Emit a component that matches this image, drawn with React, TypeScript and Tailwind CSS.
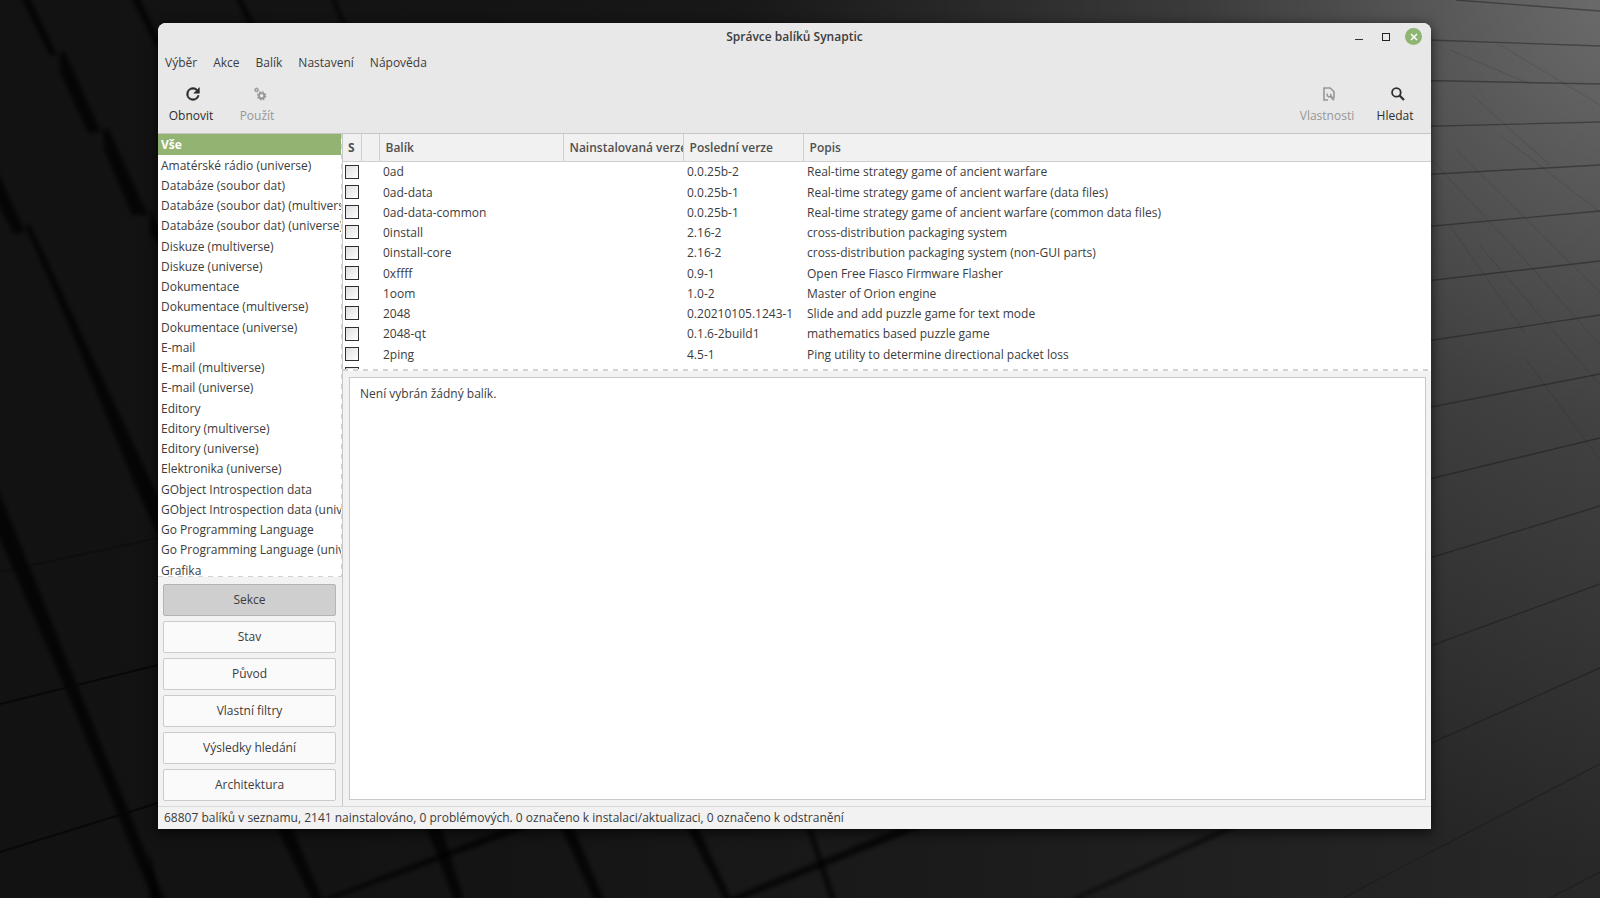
import React, { useState } from 'react';

interface Package {
    name: string;
    latest: string;
    description: string;
}

const menuItems = ['Výběr', 'Akce', 'Balík', 'Nastavení', 'Nápověda'];

const sections = [
    'Vše',
    'Amatérské rádio (universe)',
    'Databáze (soubor dat)',
    'Databáze (soubor dat) (multiverse)',
    'Databáze (soubor dat) (universe)',
    'Diskuze (multiverse)',
    'Diskuze (universe)',
    'Dokumentace',
    'Dokumentace (multiverse)',
    'Dokumentace (universe)',
    'E-mail',
    'E-mail (multiverse)',
    'E-mail (universe)',
    'Editory',
    'Editory (multiverse)',
    'Editory (universe)',
    'Elektronika (universe)',
    'GObject Introspection data',
    'GObject Introspection data (universe)',
    'Go Programming Language',
    'Go Programming Language (universe)',
    'Grafika',
];

const filters = ['Sekce', 'Stav', 'Původ', 'Vlastní filtry', 'Výsledky hledání', 'Architektura'];

const packages: Package[] = [
    { name: '0ad', latest: '0.0.25b-2', description: 'Real-time strategy game of ancient warfare' },
    { name: '0ad-data', latest: '0.0.25b-1', description: 'Real-time strategy game of ancient warfare (data files)' },
    { name: '0ad-data-common', latest: '0.0.25b-1', description: 'Real-time strategy game of ancient warfare (common data files)' },
    { name: '0install', latest: '2.16-2', description: 'cross-distribution packaging system' },
    { name: '0install-core', latest: '2.16-2', description: 'cross-distribution packaging system (non-GUI parts)' },
    { name: '0xffff', latest: '0.9-1', description: 'Open Free Fiasco Firmware Flasher' },
    { name: '1oom', latest: '1.0-2', description: 'Master of Orion engine' },
    { name: '2048', latest: '0.20210105.1243-1', description: 'Slide and add puzzle game for text mode' },
    { name: '2048-qt', latest: '0.1.6-2build1', description: 'mathematics based puzzle game' },
    { name: '2ping', latest: '4.5-1', description: 'Ping utility to determine directional packet loss' },
    { name: '2to3', latest: '3.10.4-0ubuntu2', description: '2to3 binary using python3' },
];

// Dark tiled desktop behind the window
const Wallpaper: React.FC = () => (
    <svg
        className="absolute inset-0 w-full h-full"
        viewBox="0 0 1600 898"
        preserveAspectRatio="xMidYMid slice"
        aria-hidden="true"
    >
        <defs>
            <linearGradient id="base" x1="0" y1="0" x2="1" y2="0">
                <stop offset="0" stopColor="#121212" />
                <stop offset="0.3" stopColor="#141414" />
                <stop offset="0.6" stopColor="#1b1b1b" />
                <stop offset="1" stopColor="#282828" />
            </linearGradient>
            <radialGradient id="glow" gradientUnits="userSpaceOnUse" cx="1640" cy="-30" r="900">
                <stop offset="0" stopColor="#fff" stopOpacity="0.33" />
                <stop offset="0.5" stopColor="#fff" stopOpacity="0.12" />
                <stop offset="1" stopColor="#fff" stopOpacity="0" />
            </radialGradient>
            <filter id="soft">
                <feGaussianBlur stdDeviation="2" />
            </filter>
        </defs>
        <rect width="1600" height="898" fill="url(#base)" />
        <rect width="1600" height="898" fill="url(#glow)" />
        <g fill="#030303" fillOpacity="0.72" filter="url(#soft)">
            <path d="M20 -4 L29 -4 L58 56 L49 54 Z" />
            <path d="M60 52 L65 52 L101 132 L88 133 L60 72 Z" />
            <path d="M103 128 L108 128 L148 215 L132 215 L104 150 Z" />
            <path d="M150 208 L170 250 L150 236 Z" />
            <path d="M-4 168 L25 232 L14 234 L-4 200 Z" />
            <path d="M25 226 L30 224 L160 500 L160 540 L135 485 L70 328 Z" />
            <path d="M-4 484 L75 680 L165 900 L153 900 L66 690 L-4 530 Z" />
            <path d="M130 -4 L139 -4 L160 42 L158 50 Z" />
            <path d="M235 -4 L241 -4 L256 26 L249 26 Z" />
            <path d="M330 -4 L334 -4 L347 26 L342 26 Z" />
            <path d="M150 852 L160 902 L150 902 Z" />
            <path d="M276 826 L291 826 L323 900 L312 900 Z" />
            <path d="M426 826 L441 826 L464 900 L454 900 Z" />
            <path d="M560 826 L573 826 L604 900 L594 900 Z" />
            <path d="M686 826 L697 826 L732 900 L724 900 Z" />
            <path d="M806 826 L811 826 L836 900 L830 900 Z" />
            <path d="M512 826 L532 826 L452 856 L330 900 L320 900 Z" />
            <path d="M904 826 L926 826 L740 900 L724 900 Z" />
            <path d="M1230 826 L1239 826 L1076 900 L1069 900 Z" />
        </g>
        <g fill="none" stroke="#060606" strokeWidth="2" strokeOpacity="0.8">
            <path d="M0 704 L158 665 M0 852 L158 803" />
            <path d="M0 572 L158 538" strokeOpacity="0.3" />
        </g>
        <g fill="none" stroke="#151515" strokeOpacity="0.42" strokeWidth="1.4">
            <path d="M1456 0 L1600 11 M1400 39 L1600 46 M1400 80 L1600 84 M1400 127 L1600 122" />
            <path d="M1400 176 L1600 165 M1400 229 L1600 211 M1400 284 L1600 261 M1400 345 L1600 315" />
            <path d="M1400 413 L1600 374 M1400 486 L1600 438 M1400 567 L1600 506 M1400 657 L1600 584" />
            <path d="M1400 757 L1600 668 M1343 898 L1400 868 L1600 764 M1550 898 L1600 872" />
        </g>
        <g fill="none" stroke="#151515" strokeOpacity="0.14">
            <path d="M1472 95 L1550 165 M1456 150 L1600 292 M1500 135 L1600 212 M1432 160 L1525 260 L1600 345" />
            <path d="M1450 226 L1525 333 M1480 246 L1600 385 M1525 358 L1600 460 M1500 45 L1600 105 M1450 50 L1530 84" />
        </g>
    </svg>
);

const RefreshIcon: React.FC = () => (
    <svg className="w-4 h-4 ml-1" viewBox="2 2 20 20" fill="currentColor" stroke="currentColor" aria-hidden="true">
        <path
            strokeWidth="0.7"
            d="M17.65 6.35A7.96 7.96 0 0 0 12 4a8 8 0 1 0 7.73 10h-2.08A6 6 0 1 1 12 6c1.66 0 3.14.69 4.22 1.78L13 11h7V4z"
        />
    </svg>
);

const GearsIcon: React.FC = () => (
    <svg className="w-4 h-4 ml-[5px]" viewBox="0 0 16 16" fill="none" stroke="currentColor" aria-hidden="true">
        <circle cx="4.6" cy="4" r="1.4" strokeWidth="1.2" />
        <circle cx="4.6" cy="4" r="2.2" strokeWidth="0.8" strokeDasharray="0.9 0.83" />
        <circle cx="9.6" cy="9.8" r="2.7" strokeWidth="1.9" />
        <circle cx="9.6" cy="9.8" r="4" strokeWidth="1.3" strokeDasharray="1.7 1.44" />
    </svg>
);

const PropertiesIcon: React.FC = () => (
    <svg className="w-4 h-4 ml-1" viewBox="0 0 16 16" fill="none" stroke="currentColor" aria-hidden="true">
        <path d="M7 14 H3 V2 H9.2 L13 5.8 V12" strokeWidth="1.6" />
        <path d="M9.4 10 L13 14" strokeWidth="2.2" />
        <path d="M6.2 7.6 V9.6 L7.8 11 L9.8 10.2 V7.8" strokeWidth="1.4" />
    </svg>
);

const SearchIcon: React.FC = () => (
    <svg className="w-4 h-4 ml-[5px]" viewBox="0 0 16 16" fill="none" stroke="currentColor" aria-hidden="true">
        <circle cx="6.4" cy="6.4" r="4.3" strokeWidth="1.8" />
        <path d="M9.4 9.4 L14 14" strokeWidth="2.2" />
    </svg>
);

const App: React.FC = () => {
    const [section, setSection] = useState('Vše');
    const [filter, setFilter] = useState('Sekce');

    return (
        <div className="relative h-screen w-full flex bg-[#121212] pt-[23px] pb-[69px] pl-[158px] pr-[169px] font-['Open_Sans','Noto_Sans',sans-serif] text-xs text-[#3c3c3c]">
            <Wallpaper />
            <div className="relative flex-1 min-w-0 flex flex-col rounded-t-lg overflow-hidden bg-[#f2f2f2] shadow-[0_3px_12px_1px_rgba(0,0,0,0.6)]">
                <header className="bg-[#e8e8e8] border-b border-[#c6c6c6]">
                    <div className="grid grid-cols-[1fr_auto_1fr] items-center h-[27px]">
                        <h1 className="col-start-2 font-semibold">Správce balíků Synaptic</h1>
                        <div className="flex items-center justify-end gap-[11px] pr-[9px]">
                            <button aria-label="Minimalizovat" className="w-4 h-4 flex justify-center items-end pb-[5px]">
                                <span className="w-2 h-px bg-[#333]" />
                            </button>
                            <button aria-label="Maximalizovat" className="w-4 h-4 flex justify-center items-center">
                                <span className="w-2 h-2 border border-[#222]" />
                            </button>
                            <button aria-label="Zavřít" className="w-[17px] h-[17px] rounded-full bg-[#8fb573] flex justify-center items-center">
                                <svg className="w-2 h-2" viewBox="0 0 8 8" stroke="#fff" strokeWidth="1.5" aria-hidden="true">
                                    <path d="M1 1 L7 7 M7 1 L1 7" />
                                </svg>
                            </button>
                        </div>
                    </div>
                    <nav className="flex items-center gap-4 h-[26px] pl-[7px]">
                        {menuItems.map((item) => (
                            <button key={item}>{item}</button>
                        ))}
                    </nav>
                    <div className="flex h-[57px] pt-[10px] pr-[3px]">
                        <button className="w-[66px] flex flex-col items-center gap-[6px] text-[#2e2e2e]">
                            <RefreshIcon />
                            <span>Obnovit</span>
                        </button>
                        <button disabled className="w-[66px] flex flex-col items-center gap-[6px] text-[#979797]">
                            <GearsIcon />
                            <span>Použít</span>
                        </button>
                        <button disabled className="ml-auto w-[70px] flex flex-col items-center gap-[6px] text-[#979797]">
                            <PropertiesIcon />
                            <span>Vlastnosti</span>
                        </button>
                        <button className="w-[66px] flex flex-col items-center gap-[6px] text-[#2e2e2e]">
                            <SearchIcon />
                            <span>Hledat</span>
                        </button>
                    </div>
                </header>

                <main className="flex-1 min-h-0 flex">
                    <aside className="w-[185px] shrink-0 flex flex-col border-r border-[#c9c9c9]">
                        <div className="relative flex-1 min-h-0 overflow-hidden bg-white">
                            <ul>
                                {sections.map((item) => (
                                    <li key={item} className="h-5 [&:nth-child(4n+1)]:h-[21px]">
                                        <button
                                            onClick={() => setSection(item)}
                                            className={
                                                item === section
                                                    ? 'w-full h-full pl-[3px] text-left whitespace-nowrap bg-[#92b372] text-white font-bold'
                                                    : 'w-full h-full pl-[3px] pt-px text-left whitespace-nowrap'
                                            }
                                        >
                                            {item}
                                        </button>
                                    </li>
                                ))}
                            </ul>
                            <div className="absolute inset-x-0 bottom-0 h-px bg-[repeating-linear-gradient(90deg,#d2d2d2_0_5px,#fff_5px_10px)]" />
                            <div className="absolute inset-y-0 right-0 w-px bg-[repeating-linear-gradient(180deg,#d2d2d2_0_5px,#fff_5px_10px)]" />
                        </div>
                        <div className="flex flex-col gap-[5px] pt-[7px] pb-[5px] pl-[5px] pr-[6px]">
                            {filters.map((item) => (
                                <button
                                    key={item}
                                    onClick={() => setFilter(item)}
                                    className={
                                        item === filter
                                            ? 'h-8 rounded-xs border border-[#b4b4b4] bg-[#cfcfcf]'
                                            : 'h-8 rounded-xs border border-[#cbcbcb] bg-[#fafafa]'
                                    }
                                >
                                    {item}
                                </button>
                            ))}
                        </div>
                    </aside>

                    <div className="flex-1 min-w-0 flex flex-col">
                        <div className="relative h-[237px] overflow-hidden bg-white">
                            <table className="w-full table-fixed border-collapse whitespace-nowrap text-left">
                                <colgroup>
                                    <col className="w-[18px]" />
                                    <col className="w-[18px]" />
                                    <col className="w-[184px]" />
                                    <col className="w-[120px]" />
                                    <col className="w-[120px]" />
                                    <col />
                                </colgroup>
                                <thead>
                                    <tr className="h-[27px] bg-[#f1f1f1] text-[#505050]">
                                        <th className="pl-[5px] pt-px font-bold border-b border-r border-[#cfcfcf]">S</th>
                                        <th className="border-b border-r border-[#cfcfcf]" aria-label="Podpora" />
                                        <th className="pl-[6px] pt-px font-semibold border-b border-r border-[#cfcfcf]">Balík</th>
                                        <th className="pl-[6px] pt-px font-semibold border-b border-r border-[#cfcfcf] overflow-hidden">Nainstalovaná verze</th>
                                        <th className="pl-[6px] pt-px font-semibold border-b border-r border-[#cfcfcf]">Poslední verze</th>
                                        <th className="pl-[6px] pt-px font-semibold border-b border-[#cfcfcf]">Popis</th>
                                    </tr>
                                </thead>
                                <tbody>
                                    {packages.map((pkg) => (
                                        <tr key={pkg.name} className="h-5 [&:nth-child(4n+1)]:h-[21px]">
                                            <td className="pl-[2px]">
                                                <input
                                                    type="checkbox"
                                                    aria-label={pkg.name}
                                                    className="block appearance-none w-[14px] h-[14px] border border-[#2f2f2f] bg-linear-to-br from-[#dedede] to-white"
                                                />
                                            </td>
                                            <td />
                                            <td className="pl-1 pt-px">{pkg.name}</td>
                                            <td />
                                            <td className="pl-1 pt-px">{pkg.latest}</td>
                                            <td className="pl-1 pt-px">{pkg.description}</td>
                                        </tr>
                                    ))}
                                </tbody>
                            </table>
                            <div className="absolute inset-x-0 bottom-0 h-[2px] bg-[repeating-linear-gradient(90deg,#d2d2d2_0_5px,#fff_5px_10px)]" />
                        </div>
                        <div className="flex-1 min-h-0 flex p-[6px] pr-[5px]">
                            <textarea
                                readOnly
                                aria-label="Popis balíku"
                                value="Není vybrán žádný balík."
                                className="flex-1 resize-none border border-[#c9c9c9] bg-white px-[10px] py-2 outline-none"
                            />
                        </div>
                    </div>
                </main>

                <footer className="h-[23px] flex items-center border-t border-[#d9d9d9] pl-[6px]">
                    68807 balíků v seznamu, 2141 nainstalováno, 0 problémových. 0 označeno k instalaci/aktualizaci, 0 označeno k odstranění
                </footer>
            </div>
        </div>
    );
};

export default App;
